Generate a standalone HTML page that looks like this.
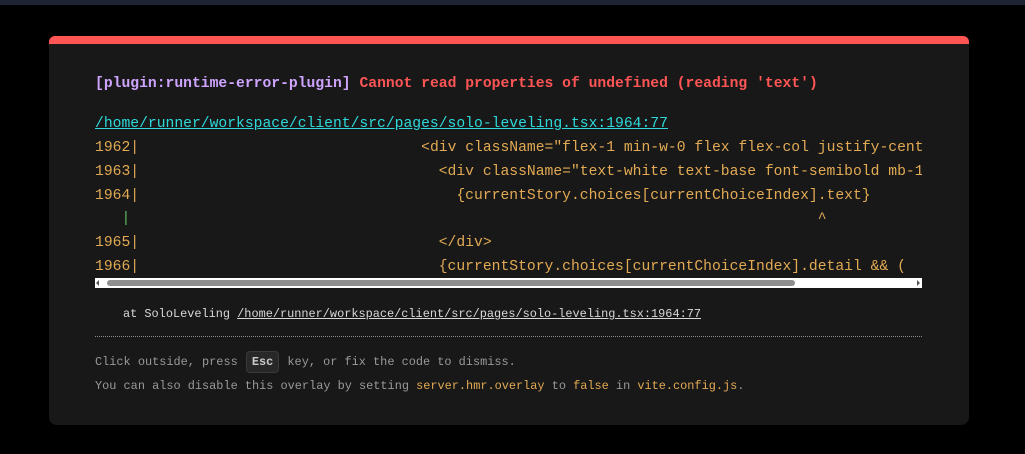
<!DOCTYPE html>
<html><head><meta charset="utf-8"><style>
html,body{margin:0;padding:0;background:#000;width:1025px;height:454px;overflow:hidden}
body{font-family:"Liberation Mono",monospace;position:relative}
.top{position:absolute;left:0;top:0;width:1025px;height:5px;background:#1d2333}
.panel{position:absolute;left:49px;top:36px;width:920px;height:389px;background:#181818;border-radius:6px 6px 8px 8px;overflow:hidden}
.red{position:absolute;left:0;top:0;width:100%;height:8px;background:#ff5555}
.t{position:absolute;white-space:pre;font-size:14.7px;line-height:20px;color:#d8d8d8}
.code{color:#e2aa53}
.s{position:absolute;white-space:pre;font-size:11.9px;line-height:18px}
</style></head><body>
<div class="top"></div>
<div class="panel">
<div class="red"></div>
<div class="t" style="left:46px;top:38px;font-weight:bold"><span style="color:#cfa4ff">[plugin:runtime-error-plugin]</span> <span style="color:#ff5555">Cannot read properties of undefined (reading 'text')</span></div>
<div class="t" style="left:46px;top:78px;color:#2dd9da;text-decoration:underline">/home/runner/workspace/client/src/pages/solo-leveling.tsx:1964:77</div>
<div style="position:absolute;left:46px;top:102px;width:827px;height:140px;overflow:hidden">
<div class="t code" style="left:0;top:0">1962|                                <span>&lt;div className="flex-1 min-w-0 flex flex-col justify-center</span></div>
<div class="t code" style="left:0;top:24px">1963|                                  &lt;div className="text-white text-base font-semibold mb-1 truncate"&gt;</div>
<div class="t code" style="left:0;top:48px">1964|                                    {currentStory.choices[currentChoiceIndex].text}</div>
<div class="t code" style="left:0;top:71px">   <span style="color:#5fb85f">|</span>                                                                              ^</div>
<div class="t code" style="left:0;top:95px">1965|                                  &lt;/div&gt;</div>
<div class="t code" style="left:0;top:119px">1966|                                  {currentStory.choices[currentChoiceIndex].detail &amp;&amp; (</div>
</div>
<div style="position:absolute;left:46px;top:242px;width:827px;height:10px;background:#fff"></div>
<div style="position:absolute;left:58px;top:244px;width:688px;height:6px;background:#8f8f8f;border-radius:3px"></div>
<div style="position:absolute;left:47px;top:244px;width:0;height:0;border-top:3px solid transparent;border-bottom:3px solid transparent;border-right:3px solid #555"></div>
<div style="position:absolute;left:868px;top:244px;width:0;height:0;border-top:3px solid transparent;border-bottom:3px solid transparent;border-left:3px solid #555"></div>
<div class="s" style="left:74px;top:269px;color:#d8d8d8">at SoloLeveling <span style="text-decoration:underline">/home/runner/workspace/client/src/pages/solo-leveling.tsx:1964:77</span></div>
<div style="position:absolute;left:46px;top:300px;width:827px;border-top:1px dotted #8a8a8a"></div>
<div class="s" style="left:46px;top:315px;color:#999">Click outside, press <span style="display:inline-block;background:#282828;border:1px solid #3a3a3a;border-radius:4px;color:#ccc;font-weight:bold;padding:2px 5px;line-height:16px;margin:0 1px">Esc</span> key, or fix the code to dismiss.</div>
<div class="s" style="left:46px;top:341px;color:#999">You can also disable this overlay by setting <span style="color:#e2aa53">server.hmr.overlay</span> to <span style="color:#e2aa53">false</span> in <span style="color:#e2aa53">vite.config.js</span>.</div>
</div>
</body></html>
